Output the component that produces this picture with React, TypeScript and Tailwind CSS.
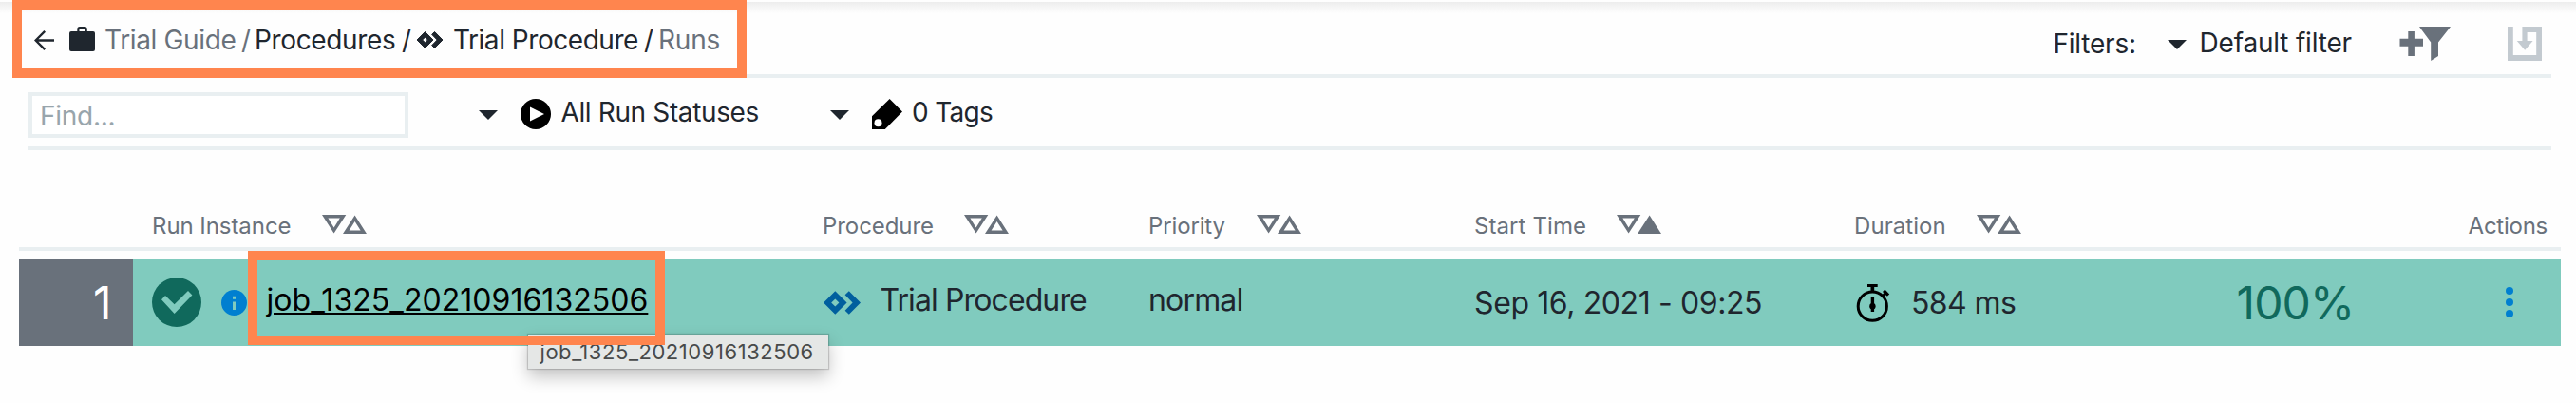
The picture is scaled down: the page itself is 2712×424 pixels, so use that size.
import React from 'react';

function BackArrow() {
  return (
    <svg className="h-[21px] w-[21px] shrink-0" viewBox="0 0 21 21" fill="none" stroke="#1f262e" strokeWidth="2.3">
      <path d="M21 10.5H1.6M11.2 0.9L1.6 10.5L11.2 20.1" />
    </svg>
  );
}

function Briefcase() {
  return (
    <svg className="-mt-[2px] h-[26px] w-[27px] shrink-0" viewBox="0 0 27 26">
      <rect x="0" y="5" width="27" height="21" rx="2" fill="#1f262e" />
      <path d="M9.4 6V2.6Q9.4 1.1 10.9 1.1H16.2Q17.7 1.1 17.7 2.6V6" fill="none" stroke="#1f262e" strokeWidth="2.2" />
    </svg>
  );
}

function ProcedureIcon({ className, color, round }: { className: string; color: string; round?: boolean }) {
  return (
    <svg className={className} viewBox="0 0 39 25">
      <g fill={color} stroke={round ? color : 'none'} strokeWidth={round ? 1.4 : 0} strokeLinejoin="round">
        <path
          fillRule="evenodd"
          d="M12.3 0.2L24.6 12.5L12.3 24.8L0 12.5ZM12.3 8.4L8.2 12.5L12.3 16.6L16.4 12.5Z"
        />
        <path d="M26.8 0.2L39 12.5L26.8 24.8L22.6 20.7L30.6 12.5L22.6 4.3Z" />
      </g>
    </svg>
  );
}

function Caret({ className }: { className: string }) {
  return (
    <svg className={'h-[10px] w-[20px] shrink-0 ' + className} viewBox="0 0 20 10">
      <path d="M0 0H20L10 10Z" fill="#1f262e" />
    </svg>
  );
}

function AddFilter() {
  return (
    <svg className="h-[36px] w-[54px] shrink-0" viewBox="0 0 54 36" fill="#69717b">
      <path d="M9.3 5H15.9V12.7H25V20.7H15.9V31H9.3V20.7H0.5V12.7H9.3Z" />
      <path d="M21 0H54L41 16.5V31L33.2 36V16.5Z" />
    </svg>
  );
}

function Import() {
  return (
    <svg className="ml-[60px] h-[36px] w-[36px] shrink-0" viewBox="0 0 36 36" fill="#c3cad0">
      <path d="M0 0H5.8V30H30.2V6H20.6V15H26.6L18.2 24.7L9.8 15H15.4V0H36V36H0Z" />
    </svg>
  );
}

function PlayCircle() {
  return (
    <svg className="h-8 w-8 shrink-0" viewBox="0 0 32 32">
      <circle cx="16" cy="16" r="16" fill="#000" />
      <path d="M10 8.5L25 16L10 23.5Z" fill="#fff" />
    </svg>
  );
}

function Tag() {
  return (
    <svg className="h-8 w-8 shrink-0" viewBox="0 0 32 32">
      <path d="M18.6 0L32 13.4L13.8 32H0V18.2Z" fill="#000" />
      <circle cx="6.5" cy="25.3" r="4" fill="#fff" />
    </svg>
  );
}

function Sort({ active }: { active?: boolean }) {
  return (
    <svg className="mt-[3px] h-[20px] w-[47px] shrink-0" viewBox="0 0 47 20" fill="#69717b" fillRule="evenodd">
      <path d="M0 0H25.3L12.6 19.5ZM6.4 3.6L12.6 13.6L18.8 3.6Z" />
      <path d={active ? 'M34.6 0.6L47 20H22Z' : 'M34.6 0.6L47 20H22ZM34.6 7L28.6 16.6H40.6Z'} />
    </svg>
  );
}

function CheckCircle() {
  return (
    <svg className="h-[52px] w-[52px] shrink-0" viewBox="0 0 52 52">
      <circle cx="26" cy="26" r="26" fill="#10695c" />
      <path d="M10 23.2L14 19L23.6 28.3L38 14L42.4 18.4L23.6 38Z" fill="#80cbbe" />
    </svg>
  );
}

function Info() {
  return (
    <svg className="ml-[20.5px] h-[27px] w-[27px] shrink-0" viewBox="0 0 27 27">
      <circle cx="13.5" cy="13.5" r="13.5" fill="#007fd0" />
      <path d="M12 6.8H15V9.8H12ZM12 12.4H15V21H12Z" fill="#80cbbe" />
    </svg>
  );
}

function Stopwatch() {
  return (
    <svg className="ml-[2px] h-[41px] w-[36px] shrink-0" viewBox="0 0 36 41">
      <g fill="none" stroke="#000">
        <circle cx="17.3" cy="24.2" r="15.1" strokeWidth="3" />
        <path d="M28 13.6L31.6 10" strokeWidth="3" />
        <path d="M29.2 7.8L34 12.6" strokeWidth="3.4" />
      </g>
      <path d="M12 1H22.7V3.9H19.2V9H15.5V3.9H12Z" />
      <path d="M15.7 14.3H19.1V30H15.7Z" />
      <circle cx="17.4" cy="24.2" r="3.2" />
    </svg>
  );
}

function Heading({ label, tracking, width, active }: { label: string; tracking: string; width: string; active?: boolean }) {
  return (
    <div className="flex items-start">
      <span className={'shrink-0 ' + tracking + ' ' + width}>{label}</span>
      <Sort active={active} />
    </div>
  );
}

const columns = 'grid grid-cols-[140px_706px_343px_343px_400px_1fr]';

export default function App() {
  return (
    <div className="relative h-[424px] w-[2712px] overflow-hidden bg-[#fefefe] pt-[2px] font-[Inter,'Liberation_Sans',sans-serif] whitespace-nowrap text-[#1f262e]">
      <header className="h-[80px] bg-linear-to-b from-[#ededed] to-[#fefefe] to-[12px] pr-[26px] pl-[30px]">
        <div className="flex h-[80px] justify-between border-b-4 border-[#e9eff1] pr-[10px] pl-[6px] text-[28px] leading-[36px]">
          <nav className="flex h-[76px] items-center pt-[4px]">
            <BackArrow />
            <div className="ml-[16px] flex w-[27px]"><Briefcase /></div>
            <span className="ml-[10px] w-[144px] tracking-[-0.35px] text-[#69717b]">Trial Guide</span>
            <span className="w-[14px] text-[#69717b]">/</span>
            <span className="w-[155px] tracking-[-0.35px]">Procedures</span>
            <span className="w-[16px]">/</span>
            <ProcedureIcon className="h-[18px] w-[27px] shrink-0" color="#1f262e" round />
            <span className="ml-[11px] w-[201px] tracking-[-0.46px]">Trial Procedure</span>
            <span className="w-[15px]">/</span>
            <span className="tracking-[-0.21px] text-[#69717b]">Runs</span>
          </nav>
          <div className="flex h-[76px] items-center pt-[12px]">
            <span className="-mt-[1px] w-[120.5px] tracking-[-0.22px]">Filters:</span>
            <Caret className="mt-[2px]" />
            <span className="-mt-[3px] ml-[13.5px] w-[210.5px] tracking-[-0.19px]">Default filter</span>
            <AddFilter />
            <Import />
          </div>
        </div>
      </header>

      <div className="mr-[26px] ml-[30px] flex h-[76px] items-center border-b-4 border-[#e9eff1] text-[28px] leading-[36px]">
        <div className="mt-[6px] flex h-[48px] w-[400px] items-center border-4 border-[#e9eff1] bg-white pt-[2px] pl-[10px] tracking-[-0.27px] text-[#98a5ac]">
          <span className="-ml-[2px]">Find...</span>
        </div>
        <Caret className="mt-[6px] ml-[74px]" />
        <div className="mt-[4px] ml-[24px] flex"><PlayCircle /></div>
        <span className="ml-[10.5px] w-[283.5px] tracking-[-0.37px]">All Run Statuses</span>
        <Caret className="mt-[6px]" />
        <div className="mt-[4px] ml-[24px] flex"><Tag /></div>
        <span className="ml-[10px] tracking-[-0.69px]">0 Tags</span>
      </div>

      <div className={columns + ' mx-[20px] w-[2676px] h-[106px] border-b-4 border-[#e9eff1] pt-[65px] text-[24px] leading-[30px] text-[#69717b]'}>
        <div />
        <Heading label="Run Instance" tracking="tracking-[-0.06px]" width="w-[179px]" />
        <Heading label="Procedure" tracking="tracking-[-0.07px]" width="w-[148.5px]" />
        <Heading label="Priority" tracking="tracking-[-0.14px]" width="w-[114px]" />
        <Heading label="Start Time" tracking="tracking-[0.09px]" width="w-[150px]" active />
        <div className="flex justify-between pr-[14px]">
          <Heading label="Duration" tracking="tracking-[0.06px]" width="w-[128.5px]" />
          <span className="tracking-[-0.25px]">Actions</span>
        </div>
      </div>

      <div className={columns + ' mx-[20px] mt-[8px] w-[2676px] h-[92px] items-center bg-[#80cbbe] text-[32px] leading-[40px]'}>
        <div className="flex h-[92px] w-[120px] items-center justify-end bg-[#69717b] pt-[1px] pr-[22.5px] text-[48px] leading-[60px] text-white">
          1
        </div>
        <div className="flex items-center">
          <CheckCircle />
          <Info />
          <a className="-mt-[4px] ml-[21px] tracking-[0.04px] text-black underline decoration-2 underline-offset-[2px]">
            job_1325_20210916132506
          </a>
        </div>
        <div className="flex items-center">
          <ProcedureIcon className="ml-px h-[25px] w-[39px] shrink-0" color="#005f9e" />
          <span className="-mt-[4px] ml-[20.5px] tracking-[-0.89px]">Trial Procedure</span>
        </div>
        <span className="-mt-[4px] tracking-[-0.83px]">normal</span>
        <span className="mt-[2px] tracking-[-0.39px]">Sep 16, 2021 - 09:25</span>
        <div className="flex items-center">
          <Stopwatch />
          <span className="mt-[2px] ml-[22px] w-[342.5px] tracking-[-0.59px]">584 ms</span>
          <span className="mt-[1px] w-[283.5px] text-[48px] leading-[60px] tracking-[-0.86px] text-[#10695c]">100%</span>
          <svg className="h-[32px] w-[8px] shrink-0" viewBox="0 0 8 32" fill="#007fd0">
            <circle cx="4" cy="4" r="4" />
            <circle cx="4" cy="16" r="4" />
            <circle cx="4" cy="28" r="4" />
          </svg>
        </div>
      </div>

      <div className="absolute top-[352px] left-[556px] h-[36px] w-[316px] bg-[#e5e7e6] pt-[3px] pl-[12.5px] text-[22px] leading-[30px] tracking-[0.55px] text-[#484a4a] shadow-[0_0_1px_1px_rgba(0,0,0,0.16),0_8px_18px_rgba(0,0,0,0.24)]">
        job_1325_20210916132506
      </div>
      <div className="absolute top-0 left-[13px] h-[82px] w-[773px] border-[10px] border-[#ff854e]" />
      <div className="absolute top-[264px] left-[261px] h-[99px] w-[439px] border-[10px] border-[#ff854e]" />
    </div>
  );
}
